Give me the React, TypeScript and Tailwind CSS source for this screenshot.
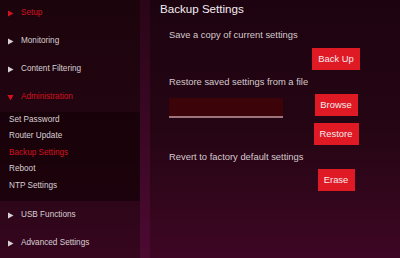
import React from 'react';

const font = { fontFamily: '"Liberation Sans", Arial, sans-serif' };

function Arrow({ down = false, color }: { down?: boolean; color: string }) {
  return (
    <svg width="7" height="7" viewBox="0 0 7 7" className="shrink-0">
      {down ? (
        <polygon points="0.5,1 6.5,1 3.5,6.5" fill={color} />
      ) : (
        <polygon points="1,0.5 6.5,3.5 1,6.5" fill={color} />
      )}
    </svg>
  );
}

function MenuItem({ label, active = false, open = false }: { label: string; active?: boolean; open?: boolean }) {
  return (
    <div className={`flex h-[28px] items-center gap-[7px] pl-[7px] text-[8.2px] ${active ? 'text-[#d3121f]' : 'text-[#d8d0d3]'}`}>
      <Arrow down={open} color={active ? '#d3121f' : '#d8d0d3'} />
      <span>{label}</span>
    </div>
  );
}

function Btn({ label, w }: { label: string; w: string }) {
  return (
    <button className={`${w} h-[22px] bg-[#df1a24] text-[9.4px] text-[#f6eaec]`}>{label}</button>
  );
}

function Row({ left, right, className = '' }: { left?: React.ReactNode; right?: React.ReactNode; className?: string }) {
  return (
    <div className={`flex w-[197px] items-start ${className}`}>
      <div className="flex-1">{left}</div>
      <div className="flex w-[60px] justify-center">{right}</div>
    </div>
  );
}

export default function App() {
  const subs = ['Set Password', 'Router Update', 'Backup Settings', 'Reboot', 'NTP Settings'];
  return (
    <div className="flex h-[258px] w-[400px] overflow-hidden" style={font}>
      {/* Sidebar */}
      <aside className="w-[140px] bg-gradient-to-b from-[#1c040c] via-[#220511] to-[#36061f]">
        <div className="-mt-[0.5px]">
          <MenuItem label="Setup" active />
          <MenuItem label="Monitoring" />
          <MenuItem label="Content Filtering" />
          <MenuItem label="Administration" active open />
          <div className="bg-[#160207]/70 pb-[7px]">
            {subs.map((s) => (
              <div
                key={s}
                className={`flex h-[16.5px] items-center pl-[9px] text-[8.2px] ${s === 'Backup Settings' ? 'text-[#d3121f]' : 'text-[#d8d0d3]'}`}
              >
                {s}
              </div>
            ))}
          </div>
          <MenuItem label="USB Functions" />
          <MenuItem label="Advanced Settings" />
        </div>
      </aside>
      <div className="w-[10px] bg-gradient-to-b from-[#2a0517] to-[#4c0a31]" />

      {/* Main */}
      <main className="flex-1 bg-gradient-to-b from-[#1d0310] via-[#250513] to-[#3e0624]">
        <h1 className="flex h-[18px] items-center pl-[10px] text-[11.6px] text-[#f4eef0]">Backup Settings</h1>
        <div className="pl-[19px] text-[9.4px] text-[#d4cacd]">
          <div className="mt-[10px] flex h-[14px] items-center">Save a copy of current settings</div>
          <Row className="mt-[6px]" right={<Btn label="Back Up" w="w-[48px]" />} />
          <div className="mt-[5px] flex h-[14px] items-center">Restore saved settings from a file</div>
          <Row
            className="mt-[5px]"
            left={<div className="mt-[4px] h-[20px] w-[114px] border-b-2 border-[#9c7479] bg-[#3c0408]" />}
            right={<Btn label="Browse" w="w-[43px]" />}
          />
          <Row className="mt-[5px]" right={<Btn label="Restore" w="w-[45px]" />} />
          <div className="mt-[5px] flex h-[14px] items-center">Revert to factory default settings</div>
          <Row className="mt-[5px]" right={<Btn label="Erase" w="w-[37px]" />} />
        </div>
      </main>
    </div>
  );
}
